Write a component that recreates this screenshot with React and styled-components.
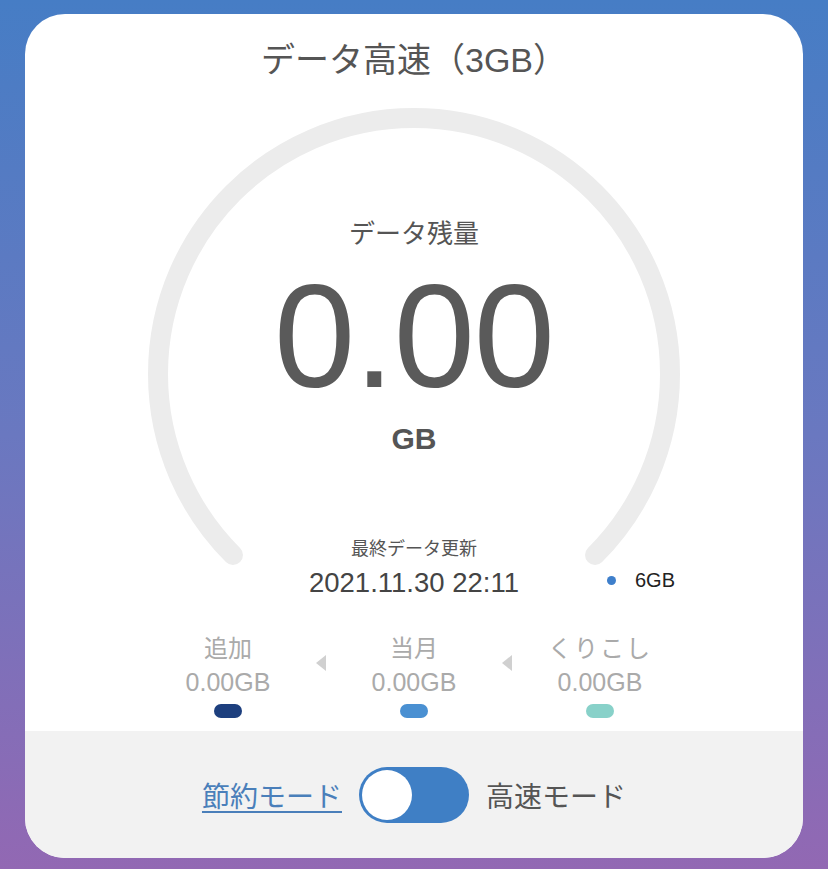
import { Fragment } from 'react'
import styled, { createGlobalStyle } from 'styled-components'

const GlobalStyle = createGlobalStyle`
	html, body {
		margin: 0;
		padding: 0;
	}
	body {
		font-family: 'Liberation Sans', 'Noto Sans CJK JP', sans-serif;
		background: #ffffff;
	}
`

const JP = `'Liberation Sans', 'Noto Sans CJK JP', sans-serif`

const Page = styled.div`
	min-height: 869px;
	background: linear-gradient(180deg, #467dc5 0%, #6a78c0 50%, #9268b3 100%);
	padding: 14px 25px 11px;
	box-sizing: border-box;
`

const Card = styled.div`
	width: 778px;
	height: 844px;
	background: #ffffff;
	border-radius: 40px;
	overflow: hidden;
	display: flex;
	flex-direction: column;
`

const Title = styled.h1`
	margin: 0;
	padding-top: 26px;
	font-family: ${JP};
	font-size: 34px;
	line-height: 40px;
	font-weight: 400;
	color: #555555;
	text-align: center;
`

const Gauge = styled.div`
	position: relative;
	height: 545px;
	flex-shrink: 0;
`

const GaugeArc = styled.svg`
	position: absolute;
	top: 0;
	left: 0;
	width: 100%;
	height: 100%;
`

const GaugeBody = styled.div`
	position: relative;
	display: flex;
	flex-direction: column;
	align-items: center;
	padding-top: 139px;
`

const Caption = styled.div`
	font-family: ${JP};
	font-size: 26px;
	line-height: 30px;
	color: #555555;
`

const Amount = styled.div`
	margin-top: 15px;
	font-family: 'Liberation Sans', sans-serif;
	font-size: 146px;
	line-height: 146px;
	letter-spacing: -1px;
	color: #5a5a5a;
`

const Unit = styled.div`
	margin-top: 11px;
	font-family: 'Liberation Sans', sans-serif;
	font-size: 30px;
	line-height: 36px;
	font-weight: 700;
	color: #555555;
`

const UpdatedLabel = styled.div`
	margin-top: 80px;
	font-family: ${JP};
	font-size: 18px;
	line-height: 24px;
	color: #555555;
`

const DateRow = styled.div`
	margin-top: 6px;
	width: 100%;
	display: grid;
	grid-template-columns: 1fr auto 1fr;
	align-items: center;
`

const DateText = styled.div`
	grid-column: 2;
	font-family: 'Liberation Sans', sans-serif;
	font-size: 27.5px;
	line-height: 32px;
	color: #444444;
`

const LimitTag = styled.div`
	justify-self: start;
	margin-left: 88px;
	margin-top: -6px;
	display: flex;
	align-items: center;
	font-family: 'Liberation Sans', sans-serif;
	font-size: 20px;
	color: #222222;
`

const Dot = styled.span`
	width: 9px;
	height: 9px;
	border-radius: 50%;
	background: #3e7fcb;
	margin-right: 19px;
`

const Breakdown = styled.div`
	display: flex;
	justify-content: center;
	align-items: flex-start;
	padding: 10px 0 13px;
`

const BreakItem = styled.div`
	width: 130px;
	display: flex;
	flex-direction: column;
	align-items: center;
`

const BreakLabel = styled.div`
	font-family: ${JP};
	font-size: 24px;
	line-height: 28px;
	color: #aaaaaa;
	letter-spacing: ${(p) => (p.$wide ? '2px' : '0')};
`

const BreakValue = styled.div`
	margin-top: 4px;
	font-family: 'Liberation Sans', sans-serif;
	font-size: 25px;
	line-height: 30px;
	color: #aaaaaa;
`

const Pill = styled.span`
	margin-top: 7px;
	width: 28px;
	height: 14px;
	border-radius: 7px;
	background: ${(p) => p.$color};
`

const Arrow = styled.div`
	width: 56px;
	display: flex;
	justify-content: center;
	padding-top: 20px;

	&::before {
		content: '';
		width: 0;
		height: 0;
		border-top: 8px solid transparent;
		border-bottom: 8px solid transparent;
		border-right: 10px solid #d0d0d0;
	}
`

const ModeBar = styled.div`
	flex: 1;
	background: #f2f2f2;
	display: flex;
	align-items: center;
	justify-content: center;
	gap: 17px;
`

const ModeLink = styled.a`
	font-family: ${JP};
	font-size: 28px;
	color: #4a7fba;
	text-decoration: underline;
	text-underline-offset: 4px;
	text-decoration-thickness: 2px;
	cursor: pointer;
`

const Toggle = styled.div`
	width: 110px;
	height: 56px;
	border-radius: 28px;
	background: #3f7fc5;
	display: flex;
	align-items: center;
	padding: 0 3px;
	box-sizing: border-box;
`

const Knob = styled.span`
	width: 50px;
	height: 50px;
	border-radius: 50%;
	background: #ffffff;
`

const ModeLabel = styled.span`
	font-family: ${JP};
	font-size: 28px;
	color: #555555;
`

const parts = [
	{ label: '追加', value: '0.00GB', color: '#1d3f7e' },
	{ label: '当月', value: '0.00GB', color: '#4a90d2' },
	{ label: 'くりこし', value: '0.00GB', color: '#88d1c9', wide: true },
]

export default function App() {
	const cx = 389
	const cy = 294
	const r = 256
	const d = r * Math.SQRT1_2
	const arc = `M ${cx - d} ${cy + d} A ${r} ${r} 0 1 1 ${cx + d} ${cy + d}`

	return (
		<>
			<GlobalStyle />
			<Page>
				<Card>
					<Title>データ高速（3GB）</Title>
					<Gauge>
						<GaugeArc viewBox='0 0 778 545'>
							<path
								d={arc}
								fill='none'
								stroke='#ececec'
								strokeWidth='20'
								strokeLinecap='round'
							/>
						</GaugeArc>
						<GaugeBody>
							<Caption>データ残量</Caption>
							<Amount>0.00</Amount>
							<Unit>GB</Unit>
							<UpdatedLabel>最終データ更新</UpdatedLabel>
							<DateRow>
								<DateText>2021.11.30 22:11</DateText>
								<LimitTag>
									<Dot />
									6GB
								</LimitTag>
							</DateRow>
						</GaugeBody>
					</Gauge>
					<Breakdown>
						{parts.map((p, i) => (
							<Fragment key={p.label}>
								{i > 0 && <Arrow />}
								<BreakItem>
									<BreakLabel $wide={p.wide}>{p.label}</BreakLabel>
									<BreakValue>{p.value}</BreakValue>
									<Pill $color={p.color} />
								</BreakItem>
							</Fragment>
						))}
					</Breakdown>
					<ModeBar>
						<ModeLink>節約モード</ModeLink>
						<Toggle>
							<Knob />
						</Toggle>
						<ModeLabel>高速モード</ModeLabel>
					</ModeBar>
				</Card>
			</Page>
		</>
	)
}
